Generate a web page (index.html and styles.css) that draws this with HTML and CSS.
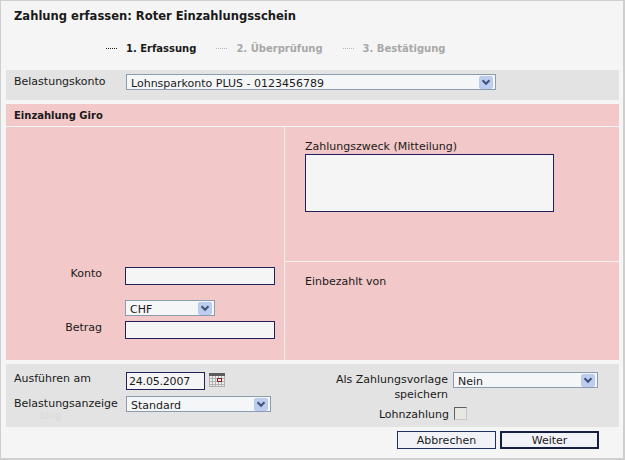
FILE: index.html
```html
<!DOCTYPE html>
<html lang="de">
<head>
<meta charset="utf-8">
<title>Zahlung erfassen</title>
<link rel="stylesheet" href="styles.css">
</head>
<body>
<div class="frame">
  <h1 class="title">Zahlung erfassen: Roter Einzahlungsschein</h1>
  <div class="steps">
    <span class="step active"><i class="dots"></i>1. Erfassung</span>
    <span class="step"><i class="dots"></i>2. Überprüfung</span>
    <span class="step"><i class="dots"></i>3. Bestätigung</span>
  </div>
  <div class="account-bar">
    <span class="account-label">Belastungskonto</span>
    <div class="select select-account"><span class="select-text">Lohnsparkonto PLUS - 0123456789</span><svg class="arrow" viewBox="0 0 16 15"><use href="#chev"/></svg></div>
  </div>
  <div class="pink-head">Einzahlung Giro</div>
  <div class="pink-main">
    <div class="left-col">
      <div class="row row-konto">
        <span class="left-label">Konto</span>
        <input class="field" type="text">
      </div>
      <div class="select select-chf"><span class="select-text">CHF</span><svg class="arrow" viewBox="0 0 16 15"><use href="#chev"/></svg></div>
      <div class="row row-betrag">
        <span class="left-label">Betrag</span>
        <input class="field" type="text">
      </div>
    </div>
    <div class="right-col">
      <div class="purpose">
        <label class="purpose-label">Zahlungszweck (Mitteilung)</label>
        <textarea class="purpose-box"></textarea>
      </div>
      <div class="payer">Einbezahlt von</div>
    </div>
  </div>
  <div class="options">
    <span class="watermark">blog</span>
    <div class="opt-left">
      <div class="opt-row opt-date">
        <span class="opt-label">Ausführen am</span>
        <input class="date" type="text" value="24.05.2007">
        <svg class="cal" viewBox="0 0 16 14">
          <rect x="0" y="0" width="16" height="14" fill="#eeeeee"/>
          <rect x="0" y="0" width="16" height="3" fill="#5c5c5c"/>
          <path d="M.5 3V14M15.500 3V14M0 13.500H16M0 5.500H16M0 8.500H16M0 11.500H16M3.500 3V14M6.500 3V14M9.500 3V14M12.500 3V14" stroke="#b0b0b0" fill="none"/>
          <rect x="8.500" y="5.500" width="4" height="3" fill="#f0e8e8" stroke="#8c1c24"/>
        </svg>
      </div>
      <div class="opt-row opt-anzeige">
        <span class="opt-label">Belastungsanzeige</span>
        <div class="select select-std"><span class="select-text">Standard</span><svg class="arrow" viewBox="0 0 16 15"><use href="#chev"/></svg></div>
      </div>
    </div>
    <div class="opt-right">
      <div class="opt-row-r">
        <span class="r-label">Als Zahlungsvorlage<br>speichern</span>
        <div class="select select-nein"><span class="select-text">Nein</span><svg class="arrow" viewBox="0 0 16 15"><use href="#chev"/></svg></div>
      </div>
      <div class="opt-row-r opt-lohn">
        <span class="r-label">Lohnzahlung</span>
        <input class="check" type="checkbox">
      </div>
    </div>
  </div>
  <div class="actions">
    <button class="btn" type="button">Abbrechen</button>
    <button class="btn btn-primary" type="button">Weiter</button>
  </div>
</div>
<svg class="defs" width="0" height="0">
  <defs>
    <symbol id="chev" viewBox="0 0 16 15">
      <rect x=".5" y=".5" width="15" height="14" rx="2" fill="#bccdf0" stroke="#b4c6ea"/>
      <path d="M4 5 8 9 12 5" fill="none" stroke="#3f5378" stroke-width="2.400"/>
    </symbol>
  </defs>
</svg>
</body>
</html>
```
FILE: styles.css
```css
* { box-sizing: border-box; }
html, body { margin: 0; padding: 0; }
body {
  width: 625px;
  height: 460px;
  overflow: hidden;
  background: #f5f5f5;
  font-family: "DejaVu Sans", Verdana, sans-serif;
  font-size: 11px;
  color: #1a1a1a;
}
.frame {
  position: relative;
  width: 625px;
  height: 460px;
  border: solid #cfcfcf;
  border-width: 1px 2px 2px 1px;
  padding: 0 4px 0 5px;
}
.title {
  margin: 0;
  padding: 8px 0 0 8px;
  height: 37px;
  font-size: 11.55px;
  line-height: 14px;
  font-weight: bold;
  color: #1a1a1a;
}
.steps {
  display: flex;
  height: 32px;
  padding: 4px 0 0 100px;
  font-size: 10px;
  font-weight: bold;
  color: #a8a8a8;
  line-height: 14px;
}
.step { display: flex; align-items: center; height: 14px; margin-right: 20px; }
.step.active { color: #1a1a1a; }
.dots {
  width: 11px;
  height: 0;
  margin: 0 9px 2px 0;
  border-top: 1px dotted #b5b5b5;
}
.step.active .dots { border-top-color: #1a1a1a; }
.account-bar {
  display: flex;
  height: 30px;
  background: #e3e3e3;
  padding: 4px 0 0 8px;
}
.account-label { width: 112px; line-height: 14px; padding-top: 1px; }
.select {
  display: flex;
  align-items: center;
  justify-content: space-between;
  height: 16px;
  overflow: hidden;
  background: #f5f6f8;
  border: 1px solid #8b9bb0;
  padding: 0 1px 0 4px;
}
.select-text { line-height: 14px; padding-top: 4px; white-space: nowrap; }
.arrow { width: 16px; height: 13px; flex: none; }
.select-account { width: 370px; }
.defs { position: absolute; }
.pink-head {
  height: 22px;
  margin-top: 4px;
  background: #f2c8c8;
  padding: 5px 0 0 8px;
  font-size: 10px;
  line-height: 13px;
  font-weight: bold;
}
.pink-main {
  display: flex;
  height: 233px;
  margin-top: 1px;
  background: #f2c8c8;
}
.left-col {
  width: 279px;
  flex: none;
  border-right: 1px solid #f8eeee;
  padding: 140px 0 0 119px;
  position: relative;
}
.row { display: flex; align-items: flex-start; }
.row-konto { height: 33px; }
.left-label {
  position: absolute;
  left: 0;
  width: 96px;
  text-align: right;
  line-height: 14px;
}
.field {
  width: 150px;
  height: 18px;
  margin: 0;
  padding: 0 3px;
  background: #f5f5f5;
  border: 1px solid #20205c;
  border-radius: 0;
  outline: none;
}
.select-chf { width: 90px; height: 16px; }
.row-betrag { margin-top: 5px; }
.right-col { flex: 1; display: flex; flex-direction: column; }
.purpose {
  height: 135px;
  border-bottom: 1px solid #f8eeee;
  padding: 13px 0 0 20px;
}
.purpose-label { display: block; line-height: 14px; }
.purpose-box {
  display: block;
  width: 249px;
  height: 58px;
  margin: 0;
  padding: 2px;
  background: #f5f5f5;
  border: 1px solid #20205c;
  border-radius: 0;
  outline: none;
  resize: none;
}
.payer { padding: 13px 0 0 20px; line-height: 14px; }
.options {
  position: relative;
  display: flex;
  justify-content: space-between;
  height: 63px;
  margin-top: 4px;
  background: #e3e3e3;
  padding: 8px 21px 0 8px;
}
.watermark {
  position: absolute;
  left: 34px;
  top: 47px;
  font-size: 10px;
  line-height: 10px;
  color: #dadada;
}
.opt-row { display: flex; align-items: flex-start; }
.opt-date { height: 24px; }
.opt-label { width: 112px; line-height: 14px; }
.date {
  width: 79px;
  height: 18px;
  margin: 0;
  padding: 0 2px;
  font: inherit;
  letter-spacing: -.2px;
  color: inherit;
  background: #f5f5f5;
  border: 1px solid #20205c;
  border-radius: 0;
  outline: none;
}
.cal { width: 16px; height: 14px; margin-left: 4px; margin-top: 1px; }
.opt-anzeige .opt-label { height: 15px; padding-top: 1px; line-height: 14px; }
.select-std { width: 145px; }
.opt-right { display: flex; flex-direction: column; }
.opt-row-r { display: flex; justify-content: flex-end; }
.r-label { text-align: right; line-height: 15px; margin-right: 5px; }
.select-nein { width: 145px; }
.opt-lohn { margin-top: 5px; align-items: flex-start; }
.check {
  appearance: none;
  width: 13px;
  height: 13px;
  margin: 0 131px 0 0;
  background: #e8e8e2;
  border: 1px solid;
  border-color: #5f5f5f #c6c6c6 #c6c6c6 #5f5f5f;
}
.actions {
  display: flex;
  justify-content: flex-end;
  gap: 4px;
  padding: 4px 20px 0 0;
}
.btn {
  width: 99px;
  height: 18px;
  padding: 0;
  font: inherit;
  color: inherit;
  background: #f0f2f7;
  border: 1px solid #20305c;
  border-radius: 0;
}
.btn-primary { border-width: 2px; border-color: #142042; }
```
